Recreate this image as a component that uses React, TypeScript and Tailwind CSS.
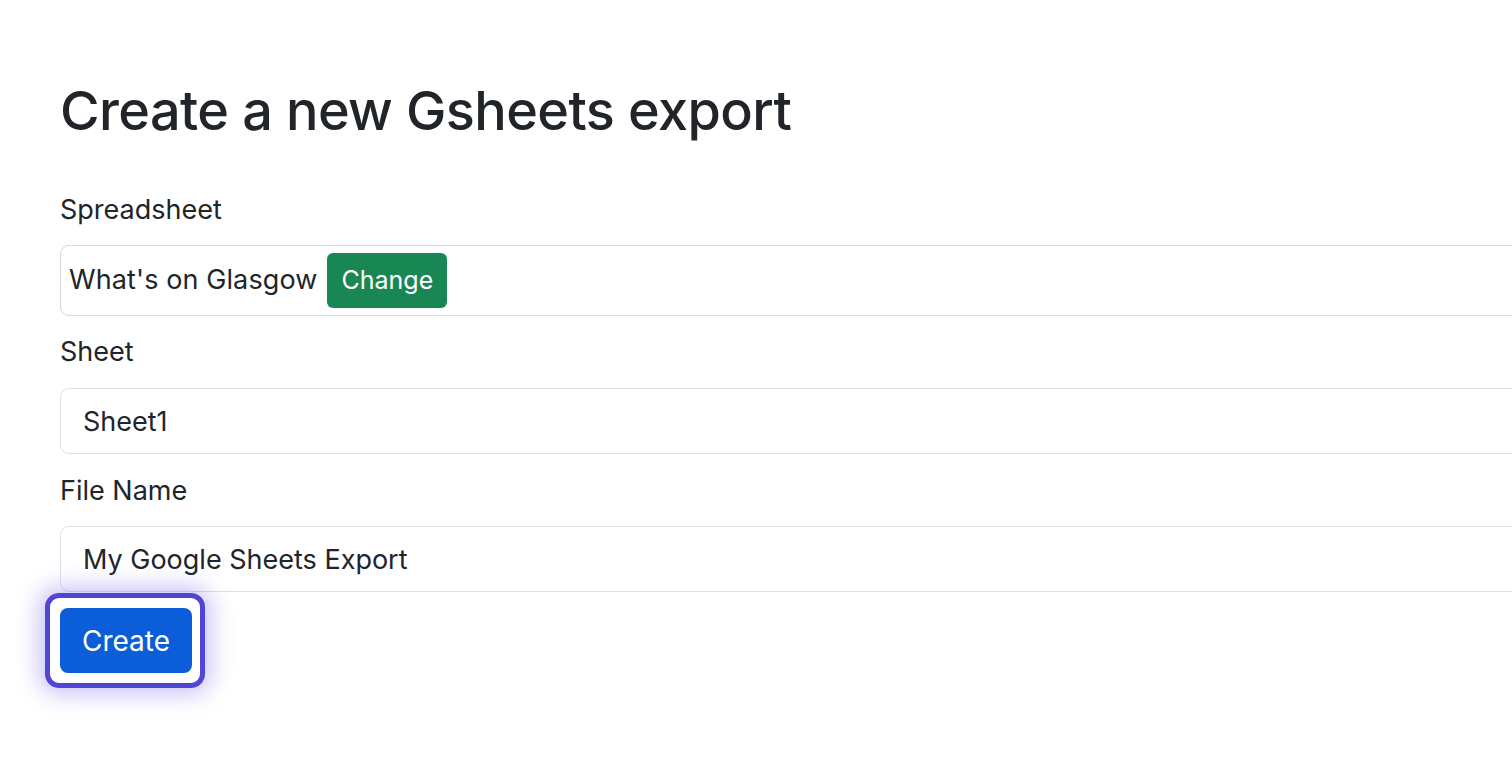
import { useState } from "react";

const FONT = "[font-family:Inter,'Liberation_Sans',sans-serif]";

function Label({ children }: { children: string }) {
	return <label className="block text-[27px] leading-[40px] text-[#212529]">{children}</label>;
}

export default function App() {
	const [sheet, setSheet] = useState("Sheet1");
	const [fileName, setFileName] = useState("My Google Sheets Export");

	return (
		<div className={`min-h-[783px] w-full overflow-hidden bg-white text-[#212529] ${FONT}`}>
			<div className="w-[1600px] pl-[60px] pt-[77px]">
				<h1 className="mb-[45px] text-[54px] font-medium leading-[68px] tracking-[-0.6px]">
					Create a new Gsheets export
				</h1>

				<form className="flex flex-col" onSubmit={(e) => e.preventDefault()}>
					<Label>Spreadsheet</Label>
					<div className="mt-[15px] flex h-[71px] items-center gap-[10px] rounded-[9px] border border-[#d3d6da] pl-[8px]">
						<span className="text-[27px] tracking-[0.1px]">What's on Glasgow</span>
						<button
							type="button"
							className="flex h-[55px] w-[120px] items-center justify-center rounded-[6px] bg-[#198754] text-[25px] text-white"
						>
							Change
						</button>
					</div>

					<div className="mt-[16px]">
						<Label>Sheet</Label>
					</div>
					<input
						value={sheet}
						onChange={(e) => setSheet(e.target.value)}
						className="mt-[16px] h-[66px] rounded-[9px] border border-[#dee2e6] px-[22px] text-[27px] text-[#212529] outline-none"
					/>

					<div className="mt-[17px]">
						<Label>File Name</Label>
					</div>
					<input
						value={fileName}
						onChange={(e) => setFileName(e.target.value)}
						className="mt-[15px] h-[66px] rounded-[9px] border border-[#dee2e6] px-[22px] text-[27px] text-[#212529] outline-none"
					/>

					<div className="relative mt-[16px] self-start">
						<span className="pointer-events-none absolute left-[-15px] top-[-15px] h-[95px] w-[160px] rounded-[14px] border-[5px] border-[#5046d6] shadow-[0_0_22px_6px_rgba(99,80,230,0.35)]" />
						<button
							type="submit"
							className="relative flex h-[65px] w-[132px] items-center justify-center rounded-[8px] bg-[#0b5ed7] text-[28px] text-white"
						>
							Create
						</button>
					</div>
				</form>
			</div>
		</div>
	);
}
